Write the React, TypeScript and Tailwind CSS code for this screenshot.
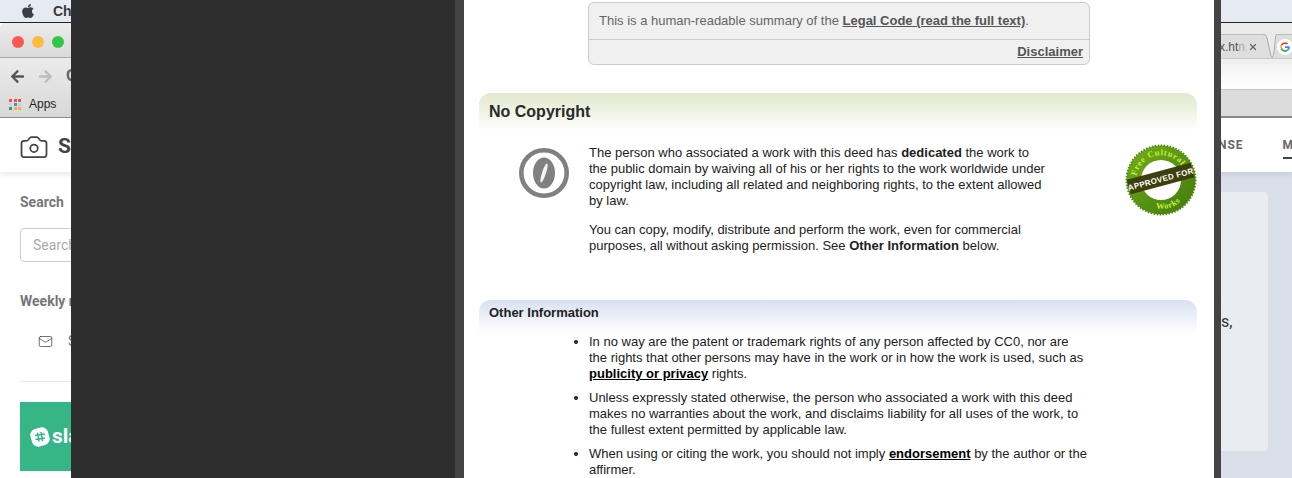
import { Camera, Mail, X } from "lucide-react";
import { FaApple, FaArrowLeft, FaArrowRight } from "react-icons/fa";

const appsColors = [
  "bg-[#e8574a]",
  "bg-[#e8574a]",
  "bg-[#e8574a]",
  "bg-[#cfcfcf]",
  "bg-[#3f8fe8]",
  "bg-[#cfcfcf]",
  "bg-[#3c9a5f]",
  "bg-[#f4b13d]",
  "bg-[#f4b13d]",
];

const LeftWindow = () => (
  <div className="w-[71px] shrink-0 overflow-hidden bg-white font-['Roboto',sans-serif]">
    <div className="w-[300px]">
      <div className="flex h-[22px] items-center bg-[#e6ebf3]">
        <FaApple className="ml-[20px] text-[#3a3f45]" size={16} />
        <span className="ml-[17px] font-['Liberation_Sans',sans-serif] text-[14px] font-bold text-[#3a3a3a]">
          Chrome
        </span>
      </div>
      <div className="h-[1px] bg-[#222]" />
      <div className="flex h-[35px] items-center gap-2 rounded-tl-[5px] border-b border-[#ababab] bg-gradient-to-b from-[#ececec] to-[#dadada] pl-[12px] pt-[3px]">
        <span className="h-3 w-3 rounded-full bg-[#fc5753]" />
        <span className="h-3 w-3 rounded-full bg-[#fdbc40]" />
        <span className="h-3 w-3 rounded-full bg-[#33c748]" />
      </div>
      <div className="h-[60px] border-b border-[#8f8f8f] bg-gradient-to-b from-[#ebebeb] to-[#d8d8d8]">
        <div className="flex h-[36px] items-center pl-[10px]">
          <FaArrowLeft className="text-[#555]" size={15} />
          <FaArrowRight className="ml-[13px] text-[#bdbdbd]" size={15} />
          <span className="ml-[13px] font-['Liberation_Sans',sans-serif] text-[16px] font-bold text-[#666]">C</span>
        </div>
        <div className="mt-[1px] flex items-center pl-[9px] font-['Liberation_Sans',sans-serif] text-[12px] text-[#222]">
          <div className="grid w-[13px] grid-cols-3 gap-[1px]">
            {appsColors.map((c, i) => (
              <span key={i} className={`h-[3px] w-[3px] ${c}`} />
            ))}
          </div>
          <span className="ml-[7px]">Apps</span>
        </div>
      </div>
      <div className="flex h-[54px] items-center pl-[19px] pt-[4px] shadow-[0_2px_6px_rgba(0,0,0,0.1)]">
        <Camera size={30} strokeWidth={1.4} className="mt-[-1px] text-[#444]" />
        <span className="ml-[9px] text-[21px] font-bold text-[#444]">Stock</span>
      </div>
      <div className="pl-[20px] pt-[21px]">
        <div className="text-[14px] font-bold leading-[18px] text-[#777]">Search</div>
        <div className="mt-[17px] flex h-[34px] items-center rounded-[4px] border border-[#ccc] pl-[12px] text-[14px] text-[#aaa]">
          Search
        </div>
        <div className="mt-[30px] text-[14px] font-bold leading-[18px] text-[#777]">Weekly newsletter</div>
        <div className="mt-[22px] flex h-[18px] items-center pl-[18px] text-[14px] text-[#777]">
          <Mail size={15} strokeWidth={1.2} className="text-[#444]" />
          <span className="ml-[15px]">Subscribe</span>
        </div>
        <div className="mt-[31px] h-[1px] bg-[#e8e8e8]" />
        <div className="mt-[20px] flex h-[69px] items-center bg-[#36b587] pl-[10px] text-[21px] font-bold text-white">
          <svg width="20" height="20" viewBox="0 0 20 20">
            <rect x="1" y="1" width="18" height="18" rx="6" fill="#fff" transform="rotate(-15 10 10)" />
            <path d="M7.5 5.5 9 14.5M11 5 12.5 14M5 8.5 15 7M5.5 12.5 15 11" stroke="#36b587" strokeWidth="1.5" />
          </svg>
          <span className="ml-[2px]">slack</span>
        </div>
      </div>
    </div>
  </div>
);

const RightWindow = () => (
  <div className="w-[71px] shrink-0 overflow-hidden bg-[#d9dfe9]">
    <div className="h-[22px] bg-[#e6ebf3]" />
    <div className="h-[1px] bg-[#222]" />
    <div className="flex h-[35px] bg-[#ebebeb] font-['Liberation_Sans',sans-serif] text-[12px] text-[#555]">
      <div className="mt-[11px] flex h-[24px] w-[42px] shrink-0 items-center border-t border-[#bbb] bg-[#dedede] pt-[1px]">
        <span className="ml-[-2px] w-[25px] shrink-0">
          x.ht<span className="text-[#aaa]">n</span>
        </span>
        <X size={10} className="ml-[4px] shrink-0 text-[#666]" strokeWidth={3} />
      </div>
      <svg width="14" height="35" viewBox="0 0 14 35" className="shrink-0">
        <path d="M0 11.500H1C3 11.500 3.500 13 4 15L7.500 31C8 33.500 8.500 35 10 35H0Z" fill="#dedede" />
        <path d="M0 11.500H1C3 11.500 3.500 13 4 15L7.500 31C8 33.500 8.500 35 10 35" fill="none" stroke="#aaa" />
        <path d="M9 35C10 34 10.500 32 11 29L12.500 14C12.800 12 13 11.500 14 11.500V35Z" fill="#dedede" />
        <path d="M9 35C10 34 10.500 32 11 29L12.500 14C12.800 12 13 11.500 14 11.500" fill="none" stroke="#aaa" />
      </svg>
      <div className="mt-[11px] flex h-[24px] w-[20px] shrink-0 items-center border-t border-[#bbb] bg-[#dedede] pt-[1px]">
        <svg width="16" height="16" viewBox="0 0 16 16" className="shrink-0">
          <circle cx="8" cy="8" r="8" fill="#fff" />
          <path d="M8 3.200a4.800 4.800 0 0 1 3.200 1.200L10 5.600A3.200 3.200 0 0 0 5 7L3.600 5.900A4.800 4.800 0 0 1 8 3.200z" fill="#ea4335" />
          <path d="M3.600 5.900 5 7a3.200 3.200 0 0 0 0 2L3.600 10.100a4.800 4.800 0 0 1 0-4.200z" fill="#fbbc05" />
          <path d="M3.600 10.100 5 9a3.200 3.200 0 0 0 5 1.500l1.200 1.100A4.800 4.800 0 0 1 3.600 10.100z" fill="#34a853" />
          <path d="M12.800 7.200H8v1.700h2.800a2.500 2.500 0 0 1-.8 1.600l1.200 1.100a4.800 4.800 0 0 0 1.600-4.400z" fill="#4285f4" />
        </svg>
      </div>
    </div>
    <div className="h-[6px] border-t border-[#c8c8c8] bg-[#efefef]" />
    <div className="h-[25px] bg-gradient-to-b from-[#f3f3f3] to-white" />
    <div className="h-[29px] border-b-2 border-[#8c8c8c] border-t border-t-[#c8c8c8] bg-[#dcdcdc]" />
    <div className="flex h-[54px] bg-white font-['Roboto',sans-serif] text-[12px] font-bold tracking-[1px] text-[#666] shadow-[0_2px_6px_rgba(0,0,0,0.1)]">
      <span className="ml-[-3px] mt-[18px]">NSE</span>
      <div className="ml-[39px] mt-[18px] h-[23px] w-[20px] border-b-2 border-[#444]">M</div>
    </div>
    <div className="ml-[-30px] mt-[20px] flex h-[259px] w-[77px] flex-col rounded-[4px] bg-[#e9ecf0] pt-[91px] font-['Roboto',sans-serif] text-[16px] leading-[26px] text-[#333]">
      <span className="pl-[22px]">s</span>
      <span className="pl-[30px]">s,</span>
    </div>
  </div>
);

const ZeroBadge = () => (
  <svg width="50" height="50" viewBox="0 0 50 50" className="shrink-0">
    <circle cx="25" cy="25" r="22.700" fill="none" stroke="#808080" strokeWidth="4.600" />
    <ellipse cx="25" cy="25" rx="11" ry="15.500" fill="#808080" />
    <ellipse cx="25" cy="25" rx="2" ry="10" fill="#f4f4f4" transform="rotate(18 25 25)" />
  </svg>
);

const ApprovedSeal = () => (
  <svg width="72" height="72" viewBox="0 0 72 72" className="shrink-0">
    <defs>
      <linearGradient id="seal" x1="0" y1="0" x2="1" y2="1">
        <stop offset="0" stopColor="#76ae18" />
        <stop offset="1" stopColor="#3f7a0e" />
      </linearGradient>
      <path id="sealTop" d="M11.500 32A25 25 0 0 1 56 21" />
      <path id="sealBottom" d="M31 64.500A29 29 0 0 0 58 55" />
    </defs>
    <circle cx="36" cy="36" r="34.500" fill="url(#seal)" stroke="#4c8a10" strokeWidth="2" strokeDasharray="1.500 1.500" />
    <circle cx="36" cy="36" r="20" fill="#fff" />
    <text fontFamily="Liberation Serif" fontSize="8.500" fontWeight="700" fill="#c4f040" letterSpacing="0.700">
      <textPath href="#sealTop">Free Cultural</textPath>
    </text>
    <text fontFamily="Liberation Serif" fontSize="8.500" fontWeight="700" fill="#c4f040" letterSpacing="0.500">
      <textPath href="#sealBottom">Works</textPath>
    </text>
    <g transform="rotate(-15 36 36)">
      <rect x="3" y="27" width="66" height="15" fill="#3d3f0c" />
      <text x="36" y="38" textAnchor="middle" fontFamily="Liberation Sans" fontSize="8" fontWeight="700" fill="#fff" letterSpacing="0.300">
        APPROVED FOR
      </text>
    </g>
  </svg>
);

const Document = () => (
  <div className="w-[750px] shrink-0 overflow-hidden bg-white font-['Liberation_Sans',sans-serif] text-[13px] leading-[16px] text-[#222]">
    <div className="ml-[124px] mt-[2px] w-[502px] rounded-[6px] border border-[#ccc] bg-[#f0f0f0] text-[#666]">
      <div className="flex h-[37px] items-center border-b border-[#ccc] pl-[10px]">
        <span>
          This is a human-readable summary of the{" "}
          <a className="font-bold text-[#555] underline">Legal Code (read the full text)</a>.
        </span>
      </div>
      <div className="flex h-[24px] items-center justify-end pr-[6px]">
        <a className="font-bold text-[#555] underline">Disclaimer</a>
      </div>
    </div>

    <div className="ml-[15px] mt-[28px] w-[718px]">
      <div className="flex h-[38px] items-center rounded-t-[12px] bg-gradient-to-b from-[#e1e8cc] to-white pb-[1px] pl-[10px] text-[16px] font-bold text-[#2a2a2a]">
        No Copyright
      </div>
      <div className="mt-[17px] flex pl-[40px]">
        <ZeroBadge />
        <div className="ml-[20px] mt-[-3px] w-[460px]">
          <p>
            The person who associated a work with this deed has <b>dedicated</b> the work to
            <br />
            the public domain by waiving all of his or her rights to the work worldwide under
            <br />
            copyright law, including all related and neighboring rights, to the extent allowed
            <br />
            by law.
          </p>
          <p className="mt-[13px]">
            You can copy, modify, distribute and perform the work, even for commercial
            <br />
            purposes, all without asking permission. See <b>Other Information</b> below.
          </p>
        </div>
        <div className="ml-auto mt-[-4px]">
          <ApprovedSeal />
        </div>
      </div>
    </div>

    <div className="ml-[15px] mt-[46px] w-[718px]">
      <div className="flex h-[34px] items-start rounded-t-[12px] bg-gradient-to-b from-[#d8e0f2] to-white pl-[10px] pt-[5px] font-bold text-[#222]">
        Other Information
      </div>
      <ul className="ml-[110px] flex w-[520px] list-disc flex-col gap-[8px]">
        <li>
          In no way are the patent or trademark rights of any person affected by CC0, nor are
          <br />
          the rights that other persons may have in the work or in how the work is used, such as
          <br />
          <a className="font-bold text-black underline">publicity or privacy</a> rights.
        </li>
        <li>
          Unless expressly stated otherwise, the person who associated a work with this deed
          <br />
          makes no warranties about the work, and disclaims liability for all uses of the work, to
          <br />
          the fullest extent permitted by applicable law.
        </li>
        <li>
          When using or citing the work, you should not imply{" "}
          <a className="font-bold text-black underline">endorsement</a> by the author or the
          <br />
          affirmer.
        </li>
      </ul>
    </div>
  </div>
);

const App = () => {
  return (
    <div className="flex h-[478px] w-[1292px] overflow-hidden">
      <LeftWindow />
      <div className="w-[384px] shrink-0 bg-[#2e2e2e]" />
      <div className="w-[9px] shrink-0 bg-[#444444]" />
      <Document />
      <div className="w-[7px] shrink-0 bg-[#444444]" />
      <RightWindow />
    </div>
  );
};

export default App;
